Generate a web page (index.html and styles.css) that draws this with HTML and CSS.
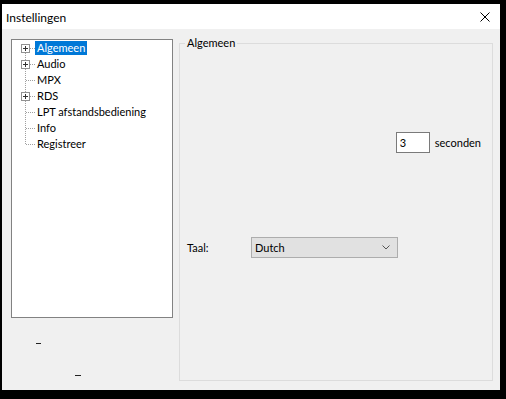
FILE: index.html
```html
<!DOCTYPE html>
<html lang="nl">
<head>
    <meta charset="UTF-8">
    <meta name="viewport" content="width=device-width, initial-scale=1.0">
    <title>Instellingen</title>
    <link rel="stylesheet" href="styles.css">
</head>
<body>

    <div class="window">
        <div class="title-bar">
            <span class="title">Instellingen</span>
            <span class="close-btn">
                <svg width="10" height="10" viewBox="0 0 10 10">
                    <path d="M0.5 0.5 L9.5 9.5 M9.5 0.5 L0.5 9.5" stroke="#000" stroke-width="1" fill="none"/>
                </svg>
            </span>
        </div>

        <div class="content">
            <div class="left-col">
                <div class="tree-box">
                    <div class="tree">
                        <svg class="tree-lines" width="23" height="112" viewBox="0 0 23 112">
                            <g stroke="#a0a0a0" stroke-width="1" stroke-dasharray="1 1" fill="none">
                                <path d="M13.5 13 V104"/>
                                <path d="M18 8.5 H23"/>
                                <path d="M18 24.5 H23"/>
                                <path d="M14 40.5 H23"/>
                                <path d="M18 56.5 H23"/>
                                <path d="M14 72.5 H23"/>
                                <path d="M14 88.5 H23"/>
                                <path d="M14 104.5 H23"/>
                            </g>
                            <g stroke="#919191" fill="#fff">
                                <rect x="9.5" y="4.5" width="8" height="8"/>
                                <rect x="9.5" y="20.5" width="8" height="8"/>
                                <rect x="9.5" y="52.5" width="8" height="8"/>
                            </g>
                            <g stroke="#333" fill="none">
                                <path d="M11 8.5 H16 M13.5 6 V11"/>
                                <path d="M11 24.5 H16 M13.5 22 V27"/>
                                <path d="M11 56.5 H16 M13.5 54 V59"/>
                            </g>
                        </svg>
                        <ul class="tree-items">
                            <li><span class="item selected">Algemeen</span></li>
                            <li><span class="item">Audio</span></li>
                            <li><span class="item">MPX</span></li>
                            <li><span class="item">RDS</span></li>
                            <li><span class="item">LPT afstandsbediening</span></li>
                            <li><span class="item">Info</span></li>
                            <li><span class="item">Registreer</span></li>
                        </ul>
                    </div>
                </div>
                <div class="mark mark-one"></div>
                <div class="mark mark-two"></div>
            </div>

            <fieldset class="group">
                <legend>Algemeen</legend>
                <div class="delay-row">
                    <span class="textbox">3</span>
                    <span>seconden</span>
                </div>
                <div class="lang-row">
                    <span class="lang-label">Taal:</span>
                    <span class="select">
                        <span>Dutch</span>
                        <svg width="8" height="5" viewBox="0 0 8 5">
                            <path d="M0.5 0.5 L4 4 L7.5 0.5" stroke="#555" fill="none"/>
                        </svg>
                    </span>
                </div>
            </fieldset>
        </div>
    </div>

</body>
</html>
```

FILE: styles.css
```css
html {
    background-color: #000;
}

body {
    margin: 0;
    padding: 4px 6px 0 2px;
    font-family: Lato, "Open Sans", sans-serif;
    font-size: 11px;
    color: #000;
}

.window {
    width: 498px;
    height: 386px;
    background-color: #f0f0f0;
    display: flex;
    flex-direction: column;
}

.title-bar {
    height: 25px;
    background-color: #fff;
    display: flex;
    align-items: center;
    justify-content: space-between;
    padding: 0 10px 0 4px;
}

.title {
    font-size: 12px;
    padding-top: 1px;
}

.close-btn {
    display: flex;
    margin-top: 1px;
}

.content {
    flex: 1;
    display: flex;
    align-items: flex-start;
    padding: 7px 0 0 9px;
}

.left-col {
    width: 162px;
    margin-top: 3px;
    margin-right: 6px;
}

.tree-box {
    height: 279px;
    box-sizing: border-box;
    background-color: #fff;
    border: 1px solid #828282;
}

.tree {
    display: flex;
}

.tree-items {
    list-style: none;
    margin: 0;
    padding: 0;
}

.tree-items li {
    height: 16px;
    display: flex;
    align-items: center;
}

.item {
    line-height: 14px;
    padding: 0 2px;
    white-space: nowrap;
}

.selected {
    background-color: #0078d7;
    color: #fff;
}

.mark {
    height: 1px;
    background-color: #222;
}

.mark-one {
    width: 5px;
    margin: 25px 0 0 25px;
}

.mark-two {
    width: 6px;
    margin: 31px 0 0 64px;
}

.group {
    width: 314px;
    height: 345px;
    box-sizing: border-box;
    margin: 0;
    padding: 0;
    border: 1px solid #dcdcdc;
}

.group legend {
    margin-left: 5px;
    padding: 0 2px;
    line-height: 14px;
}

.delay-row {
    display: flex;
    align-items: center;
    justify-content: flex-end;
    gap: 5px;
    margin-top: 82px;
    padding-right: 11px;
}

.textbox {
    width: 34px;
    height: 21px;
    box-sizing: border-box;
    background-color: #fff;
    border: 1px solid #7a7a7a;
    padding-left: 3px;
    line-height: 19px;
}

.lang-row {
    display: flex;
    align-items: center;
    margin-top: 84px;
    padding-left: 7px;
}

.lang-label {
    width: 64px;
}

.select {
    width: 147px;
    height: 21px;
    box-sizing: border-box;
    background-color: #e1e1e1;
    border: 1px solid #adadad;
    display: flex;
    align-items: center;
    justify-content: space-between;
    padding: 0 7px 0 3px;
}
```
